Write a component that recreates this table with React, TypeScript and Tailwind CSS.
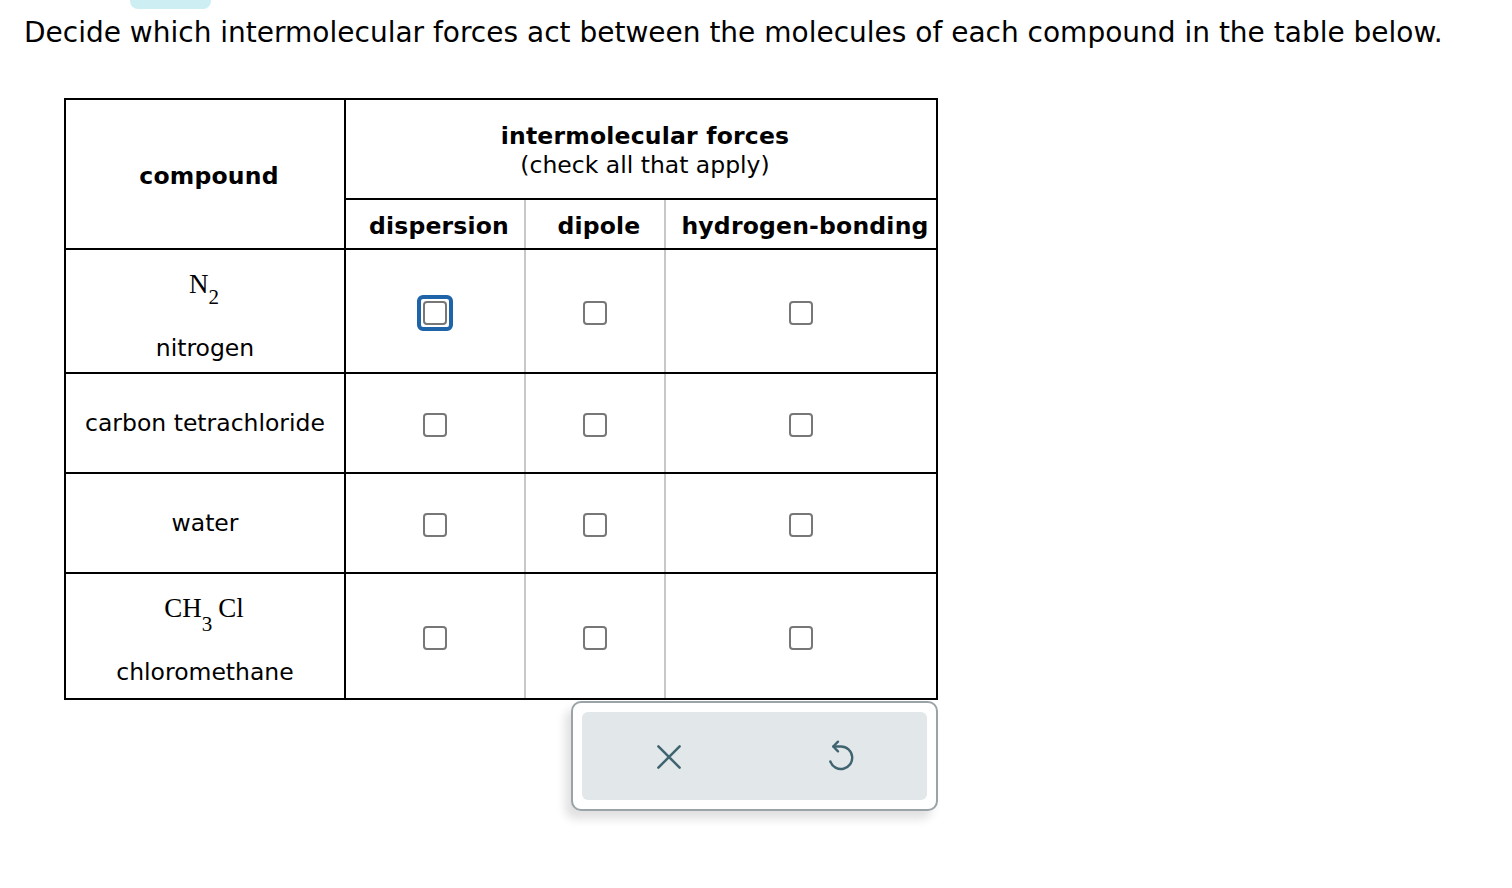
import React from "react";

function Box({ focus = false }: { focus?: boolean }) {
  if (focus) {
    return (
      <span className="inline-flex items-center justify-center w-[36px] h-[36px] rounded-[6px] border-[4px] border-[#1f64a8]">
        <span className="block w-[24px] h-[24px] rounded-[4px] border-2 border-[#777]" />
      </span>
    );
  }
  return <span className="inline-block w-[24px] h-[24px] rounded-[4px] border-2 border-[#777] align-middle" />;
}

const serif = { fontFamily: '"Liberation Serif", "Times New Roman", serif' };

export default function App() {
  const rows = [
    { h: "h-[124px]", name: (
      <div className="flex flex-col items-center pt-[10px]">
        <div className="text-[27px] leading-[28px] mb-[34px] pr-[2px]" style={serif}>N<span className="text-[21px] relative top-[11px]">2</span></div>
        <div>nitrogen</div>
      </div>
    ), focus: true },
    { h: "h-[100px]", name: <div>carbon tetrachloride</div> },
    { h: "h-[100px]", name: <div>water</div> },
    { h: "h-[126px]", name: (
      <div className="flex flex-col items-center pt-[8px]">
        <div className="text-[27px] leading-[28px] mb-[34px] pr-[2px]" style={serif}>CH<span className="text-[21px] relative top-[14px]">3</span><span className="ml-[6px]">Cl</span></div>
        <div>chloromethane</div>
      </div>
    ) },
  ];
  return (
    <div className="relative w-[1512px] h-[888px] bg-white text-black" style={{ fontFamily: '"DejaVu Sans", Verdana, sans-serif' }}>
      <div className="absolute left-[130px] top-0 w-[81px] h-[9px] rounded-b-[8px] bg-[#cdeef3]" />
      <div className="pl-[24px] pt-[15px] text-[28px] leading-[36px] whitespace-nowrap">
        Decide which intermolecular forces act between the molecules of each compound in the table below.
      </div>
      <div className="ml-[64px] mt-[47px] w-[874px]">
        <table className="border-collapse text-[23.5px] leading-[28px]">
          <thead>
            <tr className="h-[100px]">
              <th rowSpan={2} className="w-[280px] border-2 border-black font-bold tracking-[0.2px] text-center pt-[3px] pl-[8px]">compound</th>
              <th colSpan={3} className="border-2 border-black text-center align-middle pt-[2px] pl-[8px]">
                <div className="font-bold tracking-[0.2px] leading-[30px]">intermolecular forces</div>
                <div className="font-normal leading-[28px]">(check all that apply)</div>
              </th>
            </tr>
            <tr className="h-[50px]">
              <th className="w-[180px] border-y-2 border-black font-bold tracking-[0.2px] pt-[3px] pl-[8px] border-r-2 border-r-[#c8c8c8]">dispersion</th>
              <th className="w-[140px] border-y-2 border-black font-bold tracking-[0.2px] pt-[3px] pl-[8px] border-r-2 border-r-[#c8c8c8]">dipole</th>
              <th className="w-[272px] border-y-2 border-r-2 border-black font-bold tracking-[0.2px] pt-[3px] pl-[8px]">hydrogen-bonding</th>
            </tr>
          </thead>
          <tbody>
            {rows.map((r, i) => (
              <tr key={i} className={r.h}>
                <td className="border-2 border-black text-center align-middle">{r.name}</td>
                <td className="border-y-2 border-black border-r-2 border-r-[#c8c8c8] text-center align-middle">
                  <div className="flex justify-center items-center pt-[4px]"><Box focus={r.focus} /></div>
                </td>
                <td className="border-y-2 border-black border-r-2 border-r-[#c8c8c8] text-center align-middle">
                  <div className="flex justify-center items-center pt-[4px]"><Box /></div>
                </td>
                <td className="border-y-2 border-r-2 border-black text-center align-middle">
                  <div className="flex justify-center items-center pt-[4px]"><Box /></div>
                </td>
              </tr>
            ))}
          </tbody>
        </table>
        <div className="flex justify-end mt-[1px]">
          <div className="w-[367px] h-[110px] rounded-[10px] border-2 border-[#9aa3a8] bg-white p-[9px] shadow-[-6px_8px_10px_rgba(0,0,0,0.12)]">
            <div className="w-full h-full rounded-[6px] bg-[#e2e7ea] flex items-center">
              <div className="w-[172px] flex justify-center pl-[2px] pt-[2px]">
                <svg width="30" height="30" viewBox="0 0 24 24" fill="none" stroke="#3f6470" strokeWidth="2" strokeLinecap="round">
                  <path d="M3.5 3.5 L20.5 20.5 M20.5 3.5 L3.5 20.5" />
                </svg>
              </div>
              <div className="flex-1 flex justify-center pl-[0px] pt-[2px]">
                <svg width="36" height="36" viewBox="0 0 24 24" fill="none" stroke="#3f6470" strokeWidth="1.6" strokeLinecap="round" strokeLinejoin="round">
                  <path d="M7 5 H12 A7.5 7.5 0 1 1 4.9 15" />
                  <path d="M10 1.8 L6.8 5 L10 8.2" />
                </svg>
              </div>
            </div>
          </div>
        </div>
      </div>
    </div>
  );
}
